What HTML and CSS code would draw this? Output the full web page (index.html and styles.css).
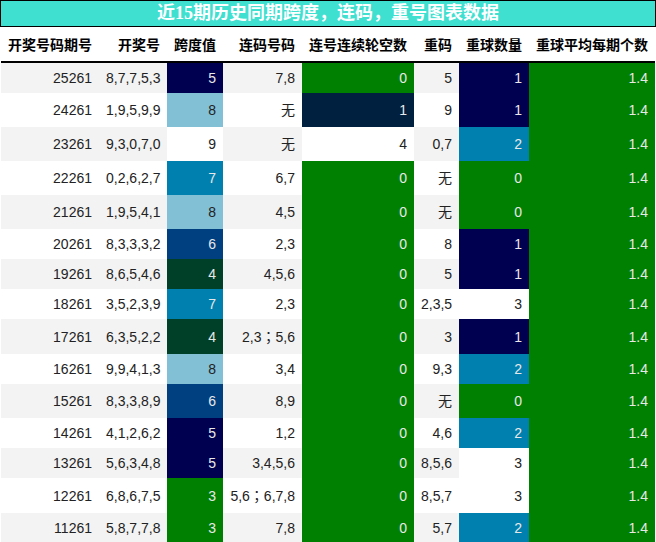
FILE: index.html
```html
<!DOCTYPE html>
<html lang="zh-CN">
<head>
<meta charset="utf-8">
<title>近15期历史同期跨度，连码，重号图表数据</title>
<link rel="stylesheet" href="styles.css">
</head>
<body>
<div class="title">近15期历史同期跨度，连码，重号图表数据</div>
<table class="grid">
  <colgroup>
    <col class="c-issue"><col class="c-draw"><col class="c-span"><col class="c-lian">
    <col class="c-miss"><col class="c-rep"><col class="c-cnt"><col class="c-avg">
  </colgroup>
  <thead>
    <tr>
      <th>开奖号码期号</th><th>开奖号</th><th>跨度值</th><th>连码号码</th>
      <th>连号连续轮空数</th><th>重码</th><th>重球数量</th><th>重球平均每期个数</th>
    </tr>
  </thead>
  <tbody>
    <tr class="odd"><td>25261</td><td>8,7,7,5,3</td><td class="h-navy">5</td><td>7,8</td><td class="h-green">0</td><td>5</td><td class="h-navy">1</td><td class="h-green">1.4</td></tr>
    <tr class="even tall"><td>24261</td><td>1,9,5,9,9</td><td class="h-lblue">8</td><td>无</td><td class="h-dnavy">1</td><td>9</td><td class="h-navy">1</td><td class="h-green">1.4</td></tr>
    <tr class="odd tall"><td>23261</td><td>9,3,0,7,0</td><td class="h-white">9</td><td>无</td><td class="h-white">4</td><td>0,7</td><td class="h-teal">2</td><td class="h-green">1.4</td></tr>
    <tr class="even tall"><td>22261</td><td>0,2,6,2,7</td><td class="h-teal">7</td><td>6,7</td><td class="h-green">0</td><td>无</td><td class="h-green">0</td><td class="h-green">1.4</td></tr>
    <tr class="odd tall"><td>21261</td><td>1,9,5,4,1</td><td class="h-lblue">8</td><td>4,5</td><td class="h-green">0</td><td>无</td><td class="h-green">0</td><td class="h-green">1.4</td></tr>
    <tr class="even"><td>20261</td><td>8,3,3,3,2</td><td class="h-dblue">6</td><td>2,3</td><td class="h-green">0</td><td>8</td><td class="h-navy">1</td><td class="h-green">1.4</td></tr>
    <tr class="odd"><td>19261</td><td>8,6,5,4,6</td><td class="h-dgreen">4</td><td>4,5,6</td><td class="h-green">0</td><td>5</td><td class="h-navy">1</td><td class="h-green">1.4</td></tr>
    <tr class="even"><td>18261</td><td>3,5,2,3,9</td><td class="h-teal">7</td><td>2,3</td><td class="h-green">0</td><td>2,3,5</td><td class="h-white">3</td><td class="h-green">1.4</td></tr>
    <tr class="odd tall"><td>17261</td><td>6,3,5,2,2</td><td class="h-dgreen">4</td><td>2,3<span class="sep">；</span>5,6</td><td class="h-green">0</td><td>3</td><td class="h-navy">1</td><td class="h-green">1.4</td></tr>
    <tr class="even"><td>16261</td><td>9,9,4,1,3</td><td class="h-lblue">8</td><td>3,4</td><td class="h-green">0</td><td>9,3</td><td class="h-teal">2</td><td class="h-green">1.4</td></tr>
    <tr class="odd tall"><td>15261</td><td>8,3,3,8,9</td><td class="h-dblue">6</td><td>8,9</td><td class="h-green">0</td><td>无</td><td class="h-green">0</td><td class="h-green">1.4</td></tr>
    <tr class="even"><td>14261</td><td>4,1,2,6,2</td><td class="h-navy">5</td><td>1,2</td><td class="h-green">0</td><td>4,6</td><td class="h-teal">2</td><td class="h-green">1.4</td></tr>
    <tr class="odd"><td>13261</td><td>5,6,3,4,8</td><td class="h-navy">5</td><td>3,4,5,6</td><td class="h-green">0</td><td>8,5,6</td><td class="h-white">3</td><td class="h-green">1.4</td></tr>
    <tr class="even tall"><td>12261</td><td>6,8,6,7,5</td><td class="h-green">3</td><td>5,6<span class="sep">；</span>6,7,8</td><td class="h-green">0</td><td>8,5,7</td><td class="h-white">3</td><td class="h-green">1.4</td></tr>
    <tr class="odd"><td>11261</td><td>5,8,7,7,8</td><td class="h-green">3</td><td>7,8</td><td class="h-green">0</td><td>5,7</td><td class="h-teal">2</td><td class="h-green">1.4</td></tr>
  </tbody>
</table>
</body>
</html>
```

FILE: styles.css
```css
html, body {
  margin: 0;
  padding: 0;
  background: #ffffff;
}

body {
  font-family: "Liberation Sans", "Noto Sans CJK SC", sans-serif;
  font-size: 14px;
  color: #222222;
}

.title {
  height: 25px;
  line-height: 25px;
  border: 1px solid #000000;
  background: #40e0d0;
  color: #ffffff;
  font-family: "Liberation Serif", "Noto Sans CJK SC", serif;
  font-size: 18px;
  font-weight: bold;
  text-align: center;
}

.grid {
  width: 654px;
  margin: 0 1px;
  border-collapse: collapse;
  table-layout: fixed;
}

.c-issue { width: 98px; }
.c-draw  { width: 68px; }
.c-span  { width: 56px; }
.c-lian  { width: 79px; }
.c-miss  { width: 112px; }
.c-rep   { width: 45px; }
.c-cnt   { width: 70px; }
.c-avg   { width: 126px; }

.grid th {
  padding: 7px 7px;
  line-height: 20px;
  font-family: "Noto Sans CJK SC", sans-serif;
  font-size: 14px;
  font-weight: bold;
  color: #000000;
  text-align: right;
  white-space: nowrap;
  background: #ffffff;
  border-bottom: 2px solid #000000;
}

.grid td {
  padding: 7px 7px;
  line-height: 16px;
  text-align: right;
  white-space: nowrap;
  vertical-align: middle;
}

.grid tr.tall td {
  line-height: 20px;
}

.sep {
  font-family: "Noto Sans CJK TC", "Noto Sans CJK SC", sans-serif;
}

.grid tr.odd td { background: #f3f3f3; }
.grid tr.even td { background: #ffffff; }

.grid tr td.h-navy   { background: #000050; color: #e8e8e8; }
.grid tr td.h-dnavy  { background: #002040; color: #e8e8e8; }
.grid tr td.h-lblue  { background: #82c0d6; color: #222222; }
.grid tr td.h-teal   { background: #0080ae; color: #e8e8e8; }
.grid tr td.h-dblue  { background: #004080; color: #e8e8e8; }
.grid tr td.h-dgreen { background: #004028; color: #e8e8e8; }
.grid tr td.h-green  { background: #008000; color: #e8e8e8; }
.grid tr td.h-white  { background: #ffffff; color: #222222; }
```
